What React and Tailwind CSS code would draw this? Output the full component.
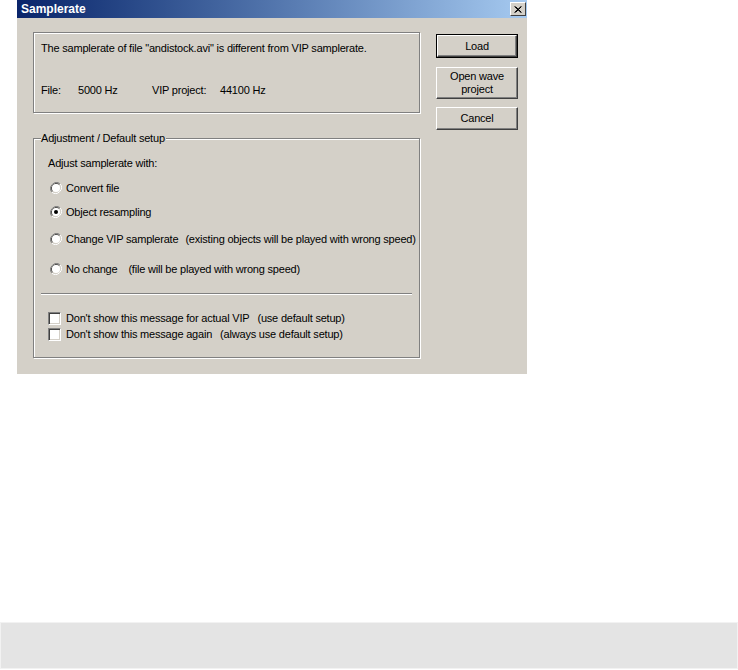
import React from 'react'

const font = { fontFamily: '"Liberation Sans", Arial, sans-serif' }

const Radio = ({ checked }) => (
    <svg width="12" height="12" viewBox="0 0 12 12" className="shrink-0">
        <path d="M10.2 1.8 A6 6 0 0 0 1.8 10.2" fill="none" stroke="#808080" strokeWidth="1" />
        <path d="M9.5 2.5 A5 5 0 0 0 2.5 9.5" fill="none" stroke="#404040" strokeWidth="1" />
        <path d="M1.8 10.2 A6 6 0 0 0 10.2 1.8" fill="none" stroke="#ffffff" strokeWidth="1" />
        <path d="M2.5 9.5 A5 5 0 0 0 9.5 2.5" fill="none" stroke="#d4d0c8" strokeWidth="1" />
        <circle cx="6" cy="6" r="4" fill="#ffffff" />
        {checked && <circle cx="6" cy="6" r="2" fill="#000000" />}
    </svg>
)

const Checkbox = () => (
    <div className="w-[13px] h-[13px] shrink-0 bg-white border border-t-[#808080] border-l-[#808080] border-r-white border-b-white shadow-[inset_1px_1px_0_#404040,inset_-1px_-1px_0_#d4d0c8]" />
)

const WinButton = ({ children, isDefault, className = '' }) => (
    <button
        className={`w-[82px] bg-[#d4d0c8] text-[11px] leading-[13px] tracking-[-0.2px] text-black flex items-center justify-center text-center ${isDefault ? 'border border-black' : ''} ${className}`}
    >
        <span className="w-full h-full flex items-center justify-center border border-t-white border-l-white border-r-[#404040] border-b-[#404040] shadow-[inset_-1px_-1px_0_#808080]">
            {children}
        </span>
    </button>
)

const App = () => {
    return (
        <div className="w-[738px] h-[670px] bg-white flex flex-col pb-[1px]" style={font}>
            <div className="ml-[17px] w-[510px] h-[374px] bg-[#d4d0c8] flex flex-col text-[11px] leading-[13px] tracking-[-0.2px] whitespace-nowrap text-black">
                {/* title bar */}
                <div className="h-[18px] flex items-center justify-between bg-gradient-to-r from-[#0a246a] to-[#a6caf0] pl-[4px] pr-[1px]">
                    <span className="text-white font-bold text-[12px] leading-[14px] tracking-normal">Samplerate</span>
                    <div className="w-[16px] h-[14px] bg-[#d4d0c8] border border-t-white border-l-white border-r-[#404040] border-b-[#404040] flex items-center justify-center">
                        <svg width="8" height="7" viewBox="0 0 8 7">
                            <path d="M0.5 0.5 L7 6.5 M1.5 0.5 L7.5 6.5 M7 0.5 L0.5 6.5 M7.5 0.5 L1.5 6.5" stroke="#000" strokeWidth="1" fill="none" />
                        </svg>
                    </div>
                </div>

                <div className="flex pl-[16px] pt-[14px]">
                    {/* left column */}
                    <div className="w-[387px] flex flex-col">
                        <div className="h-[81px] border border-[#808080] shadow-[inset_1px_1px_0_#fff,1px_1px_0_#fff] flex flex-col justify-between pl-[7px] pt-[9px] pb-[15px]">
                            <div>The samplerate of file "andistock.avi" is different from VIP samplerate.</div>
                            <div className="flex">
                                <span className="w-[37px]">File:</span>
                                <span className="w-[74px]">5000 Hz</span>
                                <span className="w-[68px]">VIP project:</span>
                                <span>44100 Hz</span>
                            </div>
                        </div>

                        <div className="relative mt-[25px] h-[220px] border border-[#808080] shadow-[inset_1px_1px_0_#fff,1px_1px_0_#fff] flex flex-col">
                            <span className="absolute left-[7px] top-[-7px] bg-[#d4d0c8] pr-[1px]">Adjustment / Default setup</span>
                            <div className="h-[16px] flex items-center mt-[16px] pl-[14px]">Adjust samplerate with:</div>
                            <div className="h-[16px] flex items-center mt-[9px] pl-[16px] gap-[4px]">
                                <Radio />
                                <span>Convert file</span>
                            </div>
                            <div className="h-[16px] flex items-center mt-[8px] pl-[16px] gap-[4px]">
                                <Radio checked />
                                <span>Object resampling</span>
                            </div>
                            <div className="h-[16px] flex items-center mt-[11px] pl-[16px] gap-[4px]">
                                <Radio />
                                <span>Change VIP samplerate</span>
                                <span className="ml-[3px]">(existing objects will be played with wrong speed)</span>
                            </div>
                            <div className="h-[16px] flex items-center mt-[14px] pl-[16px] gap-[4px]">
                                <Radio />
                                <span>No change</span>
                                <span className="ml-[7px]">(file will be played with wrong speed)</span>
                            </div>
                            <div className="mt-[16px] mx-[7px] h-[2px] border-t border-t-[#808080] border-b border-b-white" />
                            <div className="h-[16px] flex items-center mt-[15px] pl-[14px] gap-[5px]">
                                <Checkbox />
                                <span>Don't show this message for actual VIP</span>
                                <span className="ml-[3px]">(use default setup)</span>
                            </div>
                            <div className="h-[16px] flex items-center pl-[14px] gap-[5px]">
                                <Checkbox />
                                <span>Don't show this message again</span>
                                <span className="ml-[3px]">(always use default setup)</span>
                            </div>
                        </div>
                    </div>

                    {/* buttons */}
                    <div className="ml-[16px] pt-[2px] flex flex-col">
                        <WinButton isDefault className="h-[24px]">Load</WinButton>
                        <WinButton className="h-[32px] mt-[9px]">Open wave<br />project</WinButton>
                        <WinButton className="h-[23px] mt-[8px]">Cancel</WinButton>
                    </div>
                </div>
            </div>

            <div className="flex-1" />
            <div className="h-[47px] bg-[#e4e4e4] border border-[#f2f2f2]" />
        </div>
    )
}

export default App
